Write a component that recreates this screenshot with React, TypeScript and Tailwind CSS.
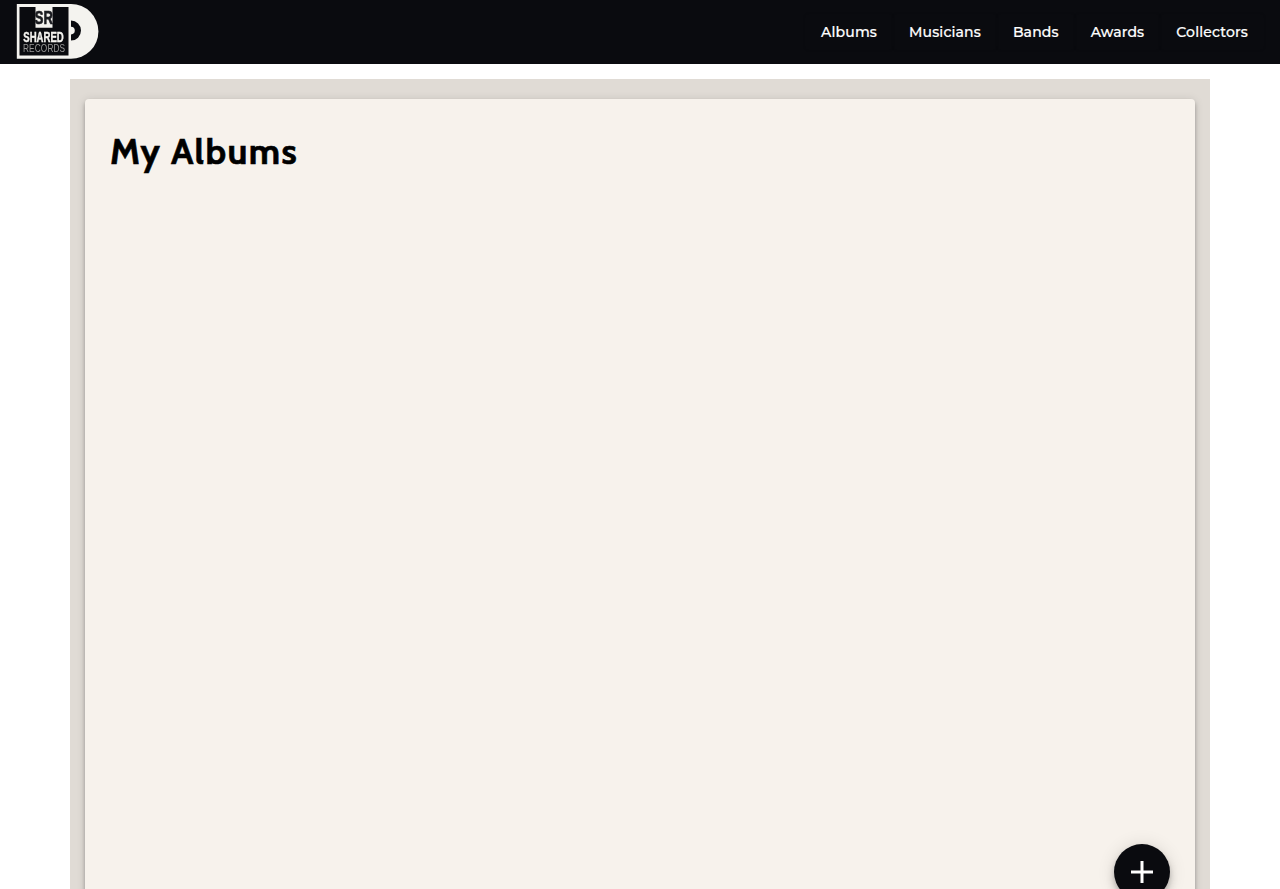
import React from "react";

const links = ["Albums", "Musicians", "Bands", "Awards", "Collectors"];

function Logo() {
  return (
    <svg width="84" height="58" viewBox="0 0 84 58" className="blur-[0.35px]" role="img" aria-label="Shared Records">
      <path d="M0.8 1H55A27.4 27.4 0 0 1 55 55.8H0.8Z" fill="#f4f3ef" />
      <path d="M3.5 4H19.5V24.8H36.5V4H52.5V52.5H3.5Z" fill="#0a0b0f" />
      <path d="M55 17.6A10 10 0 0 1 55 37.6V31.4A3.8 3.8 0 0 0 55 23.8Z" fill="#0a0b0f" />
      <text x="18.8" y="20.6" textLength="18" lengthAdjust="spacingAndGlyphs" fontFamily="Liberation Sans, sans-serif" fontWeight="700" fontSize="18.5" fill="#1b1c20" stroke="#1b1c20" strokeWidth="0.7">SR</text>
      <text x="7.3" y="38.5" textLength="40.5" lengthAdjust="spacingAndGlyphs" fontFamily="Liberation Sans, sans-serif" fontWeight="700" fontSize="15.5" fill="#f4f3ef" stroke="#f4f3ef" strokeWidth="0.4">SHARED</text>
      <g transform="translate(7 49.3) scale(0.72 1)">
        <text textLength="58.5" lengthAdjust="spacing" fontFamily="Liberation Sans, sans-serif" fontWeight="400" fontSize="11.5" fill="#9a9998">RECORDS</text>
      </g>
    </svg>
  );
}

export default function App() {
  return (
    <div className="flex h-[889px] flex-col overflow-hidden bg-white">
      <header className="flex h-16 shrink-0 items-center justify-between bg-[#0a0b0f] px-4">
        <div className="h-[58px]">
          <Logo />
        </div>
        <nav className="flex font-['Montserrat','Inter',sans-serif] text-sm font-medium tracking-[0.15px] text-white [-webkit-text-stroke:0.2px_white]">
          {links.map((label) => (
            <a
              key={label}
              href="#"
              className="flex h-9 items-center justify-center rounded px-4 whitespace-nowrap shadow-[0_0_2px_rgba(0,0,0,0.25)]"
            >
              {label}
            </a>
          ))}
        </nav>
      </header>
      <main className="mx-auto mt-[15px] flex w-[1140px] flex-1 bg-[#e0dbd5] px-[15px] pt-5">
        <section className="flex h-[860px] w-full flex-col justify-between rounded bg-[#f7f2ec] p-[25px] shadow-[0_2px_4px_-1px_rgba(0,0,0,0.2),0_4px_5px_rgba(0,0,0,0.14),0_1px_10px_rgba(0,0,0,0.12)]">
          <h1 className="mt-0.5 font-['Cabin','Lato',sans-serif] text-[36px] leading-[50px] font-bold tracking-[1.44px] text-black [-webkit-text-stroke:0.6px_black]">
            My Albums
          </h1>
          <button
            aria-label="Add album"
            className="mb-[34px] flex size-14 shrink-0 items-center justify-center self-end rounded-full bg-[#0a0b0f] text-white shadow-[0_3px_5px_-1px_rgba(0,0,0,0.2),0_6px_10px_rgba(0,0,0,0.14),0_1px_18px_rgba(0,0,0,0.12)]"
          >
            <svg width="22" height="22" viewBox="0 0 22 22" fill="currentColor">
              <path d="M9.5 0h3v9.5H22v3h-9.5V22h-3v-9.5H0v-3h9.5z" />
            </svg>
          </button>
        </section>
      </main>
    </div>
  );
}
